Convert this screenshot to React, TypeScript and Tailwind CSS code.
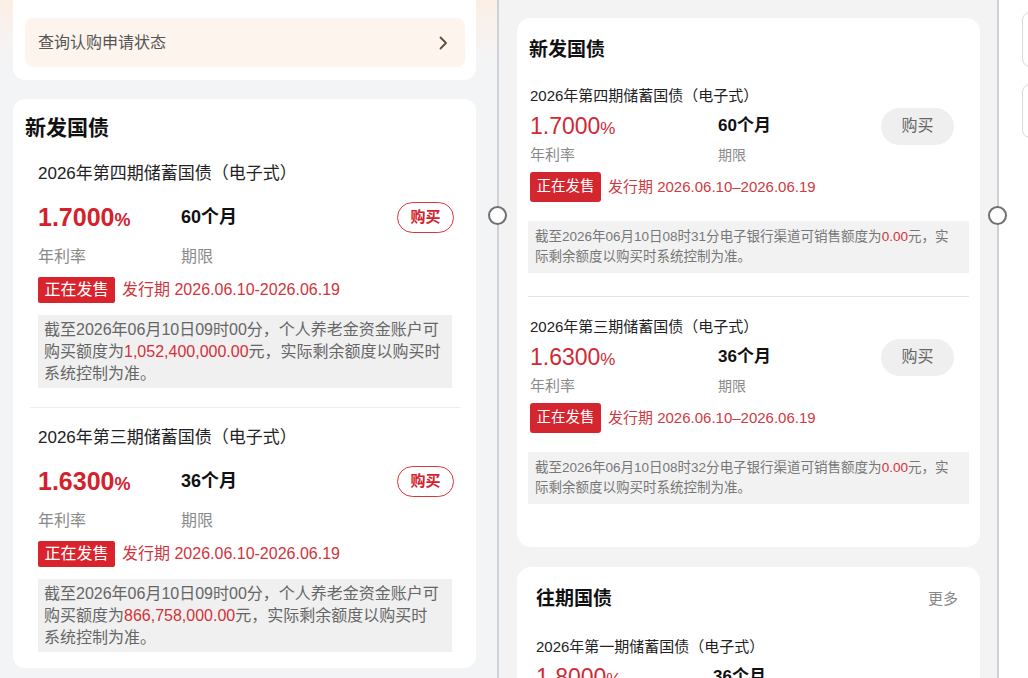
import React from "react";

const FONT = "font-['Liberation_Sans','Noto_Sans_CJK_SC',sans-serif]";

function LeftItem({ title, rate, term, amount }: { title: string; rate: string; term: string; amount: string }) {
  return (
    <div className="pl-[13px] pr-[12px]">
      <div className="h-[24px] leading-[24px] text-[17px] text-[#222] whitespace-nowrap">{title}</div>
      <div className="mt-[14px] h-[34px] flex items-center">
        <div className="w-[143px] flex items-baseline text-[#d3222c] font-bold">
          <span className="text-[25px] leading-[34px]">{rate}</span>
          <span className="text-[18px]">%</span>
        </div>
        <div className="flex-1 text-[18px] font-bold text-[#111]">{term}</div>
        <div className="-mr-[2px] w-[57px] h-[31px] rounded-full border-[1.5px] border-[#d9363e] text-[#d3222c] text-[15px] font-bold flex items-center justify-center">
          购买
        </div>
      </div>
      <div className="mt-[12px] h-[22px] flex items-center text-[16px] text-[#8a8a8a]">
        <div className="w-[143px]">年利率</div>
        <div>期限</div>
      </div>
      <div className="mt-[9px] h-[26px] flex items-center">
        <div className="h-[26px] w-[77px] bg-[#d9242d] text-white text-[16px] rounded-[2px] flex items-center justify-center">
          正在发售
        </div>
        <div className="ml-[7px] text-[16px] text-[#d2343d] whitespace-nowrap">发行期 2026.06.10-2026.06.19</div>
      </div>
      <div className="mt-[12px] h-[73px] bg-[#f0f0f0] pl-[6px] pt-[4px] text-[16px] leading-[22px] text-[#666] whitespace-nowrap">
        截至2026年06月10日09时00分，个人养老金资金账户可
        <br />
        购买额度为<span className="text-[#d3313a]">{amount}</span>元，实际剩余额度以购买时
        <br />
        系统控制为准。
      </div>
    </div>
  );
}

function MidItem({ title, rate, term, time }: { title: string; rate: string; term: string; time: string }) {
  return (
    <div>
      <div className="pl-[2px] h-[22px] leading-[22px] text-[15px] text-[#222] whitespace-nowrap">{title}</div>
      <div className="mt-[4px] h-[30px] pl-[2px] flex items-center">
        <div className="w-[188px] flex items-baseline text-[#d02a36]">
          <span className="text-[23px] leading-[30px] font-medium">{rate}</span>
          <span className="text-[17px]">%</span>
        </div>
        <div className="flex-1 text-[17px] font-bold text-[#111]">{term}</div>
        <div className="mr-[15px] w-[73px] h-[37px] shrink-0 rounded-full bg-[#efefef] text-[16px] text-[#666] flex items-center justify-center">
          购买
        </div>
      </div>
      <div className="mt-[4px] h-[20px] pl-[2px] flex items-center text-[15px] text-[#8a8a8a]">
        <div className="w-[188px]">年利率</div>
        <div className="text-[14px]">期限</div>
      </div>
      <div className="mt-[7px] h-[30px] pl-[2px] flex items-center">
        <div className="h-[30px] w-[71px] bg-[#d4262f] text-white text-[14.5px] rounded-[3px] flex items-center justify-center">
          正在发售
        </div>
        <div className="ml-[7px] text-[15px] text-[#cf3a43] whitespace-nowrap">发行期 2026.06.10–2026.06.19</div>
      </div>
      <div className="mt-[19px] h-[52px] bg-[#f2f2f2] px-[7px] py-[6px] text-[13.5px] leading-[20px] text-[#777] whitespace-nowrap">
        截至2026年06月10日{time}电子银行渠道可销售额度为<span className="text-[#d3313a]">0.00</span>元，实
        <br />
        际剩余额度以购买时系统控制为准。
      </div>
    </div>
  );
}

function Handle({ left }: { left: string }) {
  return (
    <div
      className={`absolute top-[206px] ${left} w-[19px] h-[19px] rounded-full bg-white border-2 border-[#707070]`}
    />
  );
}

export default function App() {
  return (
    <div className={`${FONT} relative w-[1028px] h-[678px] overflow-hidden flex bg-white`}>
      {/* Left panel */}
      <div className="w-[497px] h-full shrink-0 bg-gradient-to-b from-[#fbefe5] to-[#f3f4f6] to-[9%] pl-[13px]">
        <div className="w-[463px] bg-white rounded-b-[12px] pt-[18px] pb-[13px] px-[12px]">
          <div className="w-[440px] h-[49px] rounded-[8px] bg-[#fdf5ed] flex items-center justify-between pl-[13px] pr-[17px]">
            <span className="text-[16px] text-[#555]">查询认购申请状态</span>
            <svg width="9" height="14" viewBox="0 0 9 14" fill="none">
              <path d="M1.5 1.5 L7 7 L1.5 12.5" stroke="#5e4c3c" strokeWidth="1.8" strokeLinecap="round" strokeLinejoin="round" />
            </svg>
          </div>
        </div>
        <div className="mt-[19px] w-[463px] bg-white rounded-[12px] pt-[15px] pb-[16px] px-[12px]">
          <div className="h-[28px] leading-[28px] text-[21px] font-bold text-[#111]">新发国债</div>
          <div className="mt-[20px]">
            <LeftItem title="2026年第四期储蓄国债（电子式）" rate="1.7000" term="60个月" amount="1,052,400,000.00" />
          </div>
          <div className="mt-[19px] ml-[5px] mr-[4px] h-px bg-[#eeeeee]" />
          <div className="mt-[18px]">
            <LeftItem title="2026年第三期储蓄国债（电子式）" rate="1.6300" term="36个月" amount="866,758,000.00" />
          </div>
        </div>
      </div>

      {/* Middle panel */}
      <div className="w-[502px] h-full shrink-0 border-x-2 border-[#cdd1d8] bg-[#f3f3f3] px-[18px]">
        <div className="mt-[18px] w-[463px] bg-white rounded-[14px] pt-[19px] pb-[43px] px-[11px]">
          <div className="pl-[1px] h-[26px] leading-[26px] text-[19px] font-bold text-[#111]">新发国债</div>
          <div className="mt-[22px]">
            <MidItem title="2026年第四期储蓄国债（电子式）" rate="1.7000" term="60个月" time="08时31分" />
          </div>
          <div className="mt-[23px] h-px bg-[#e3e3e3]" />
          <div className="mt-[19px]">
            <MidItem title="2026年第三期储蓄国债（电子式）" rate="1.6300" term="36个月" time="08时32分" />
          </div>
        </div>
        <div className="mt-[20px] w-[463px] bg-white rounded-[14px] pt-[19px] pb-[40px] pl-[19px] pr-[22px]">
          <div className="h-[26px] flex items-center justify-between">
            <span className="text-[19px] font-bold text-[#111]">往期国债</span>
            <span className="text-[15px] text-[#888]">更多</span>
          </div>
          <div className="mt-[24px] h-[22px] leading-[22px] text-[15px] text-[#222] whitespace-nowrap">
            2026年第一期储蓄国债（电子式）
          </div>
          <div className="mt-[4px] h-[30px] flex items-center">
            <div className="w-[177px] flex items-baseline text-[#d02a36]">
              <span className="text-[23px] leading-[30px] font-medium">1.8000</span>
              <span className="text-[17px]">%</span>
            </div>
            <div className="text-[17px] font-bold text-[#111]">36个月</div>
          </div>
        </div>
      </div>

      {/* Right strip */}
      <div className="flex-1 h-full bg-white pt-[12px] pl-[23px] flex flex-col gap-[17px]">
        <div className="w-[40px] h-[55px] rounded-[8px] border-[1.5px] border-[#dadada]" />
        <div className="w-[40px] h-[54px] rounded-[8px] border-[1.5px] border-[#dadada]" />
      </div>

      <Handle left="left-[488px]" />
      <Handle left="left-[988px]" />
    </div>
  );
}
